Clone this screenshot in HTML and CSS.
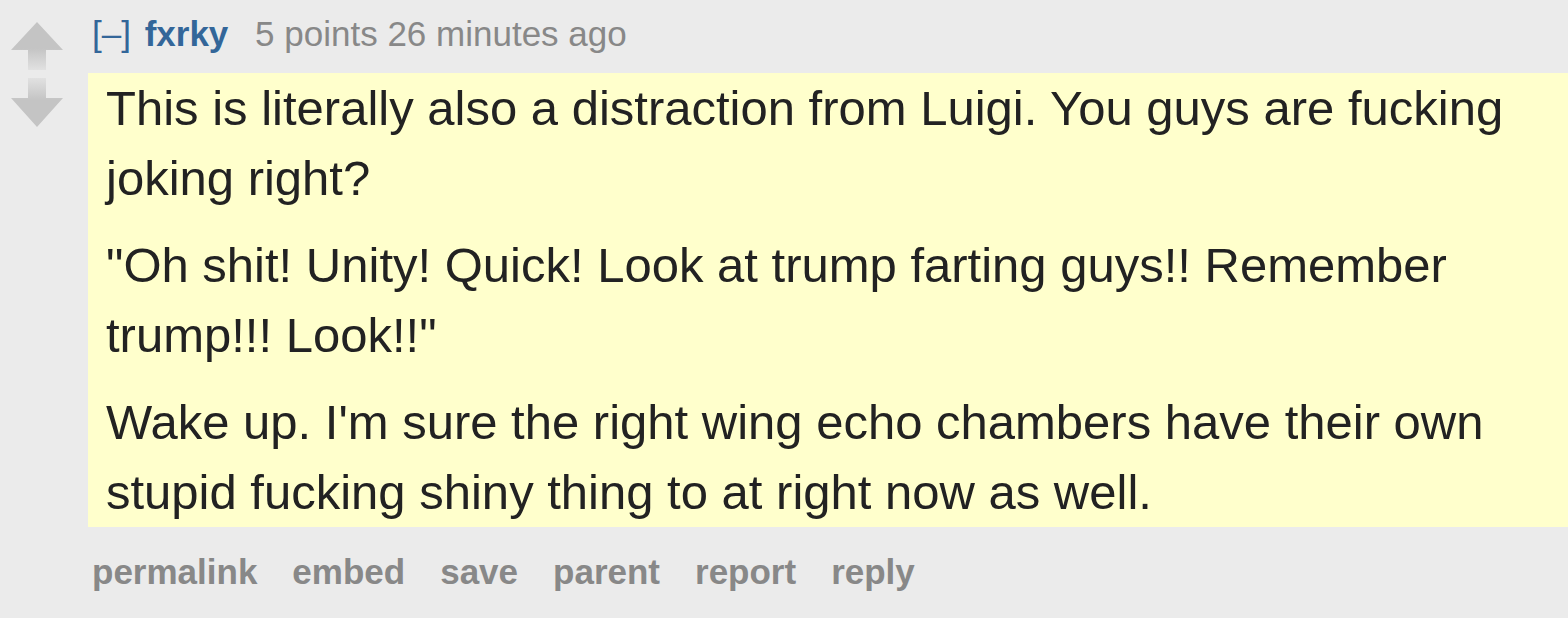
FILE: index.html
```html
<!DOCTYPE html>
<html lang="en">
<head>
  <meta charset="UTF-8">
  <meta name="viewport" content="width=device-width, initial-scale=1.0">
  <link rel="stylesheet" href="styles.css">
  <title>comment</title>
</head>
<body>
  <div class="comment">
    <div class="midcol">
      <svg class="arrow up" width="52" height="48" viewBox="0 0 52 48">
        <defs>
          <linearGradient id="fadeUp" x1="0" y1="0" x2="0" y2="1">
            <stop offset="0.55" stop-color="#c4c4c4"/>
            <stop offset="1" stop-color="#c4c4c4" stop-opacity="0.25"/>
          </linearGradient>
        </defs>
        <path d="M26 0 L52 28 L35 28 L35 48 L17 48 L17 28 L0 28 Z" fill="url(#fadeUp)"/>
      </svg>
      <svg class="arrow down" width="52" height="49" viewBox="0 0 52 49">
        <defs>
          <linearGradient id="fadeDown" x1="0" y1="1" x2="0" y2="0">
            <stop offset="0.55" stop-color="#c4c4c4"/>
            <stop offset="1" stop-color="#c4c4c4" stop-opacity="0.25"/>
          </linearGradient>
        </defs>
        <path d="M17 0 L35 0 L35 20 L52 20 L26 49 L0 20 L17 20 Z" fill="url(#fadeDown)"/>
      </svg>
    </div>
    <div class="entry">
      <p class="tagline">
        <a class="expand" href="#">[–]</a>
        <a class="author" href="#">fxrky</a>
        <span class="score">5 points</span>
        <time>26 minutes ago</time>
      </p>
      <div class="usertext">
        <p>This is literally also a distraction from Luigi. You guys are fucking joking right?</p>
        <p>"Oh shit! Unity! Quick! Look at trump farting guys!! Remember trump!!! Look!!"</p>
        <p>Wake up. I'm sure the right wing echo chambers have their own stupid fucking shiny thing to at right now as well.</p>
      </div>
      <ul class="buttons">
        <li><a href="#">permalink</a></li>
        <li><a href="#">embed</a></li>
        <li><a href="#">save</a></li>
        <li><a href="#">parent</a></li>
        <li><a href="#">report</a></li>
        <li><a href="#">reply</a></li>
      </ul>
    </div>
  </div>
</body>
</html>
```

FILE: styles.css
```css
body {
  margin: 0;
  background-color: #ebebeb;
  font-family: "Liberation Sans", Arial, sans-serif;
  color: #222;
}
a {
  text-decoration: none;
}
.comment {
  display: flex;
  padding-top: 19px;
}
.midcol {
  width: 88px;
  display: flex;
  flex-direction: column;
  padding: 3px 0 0 11px;
  box-sizing: border-box;
  gap: 8px;
}
.arrow {
  display: block;
}
.entry {
  flex: 1;
}
.tagline {
  margin: 0;
  padding-left: 4px;
  font-size: 35px;
  line-height: 30px;
  height: 54px;
  color: #888;
}
.expand {
  color: #369;
  margin-right: 4px;
}
.author {
  color: #369;
  font-weight: bold;
  margin-right: 17px;
}
.usertext {
  background-color: #ffc;
  padding: 0 0 0 18px;
  font-size: 49px;
  line-height: 70px;
}
.usertext p {
  margin: 0 0 17px;
}
.usertext p:last-child {
  margin-bottom: 0;
}
.buttons {
  list-style: none;
  margin: 0;
  padding: 22px 0 0 4px;
  display: flex;
  gap: 35px;
  font-size: 35px;
  font-weight: bold;
  line-height: 45px;
}
.buttons a {
  color: #888;
}
```
